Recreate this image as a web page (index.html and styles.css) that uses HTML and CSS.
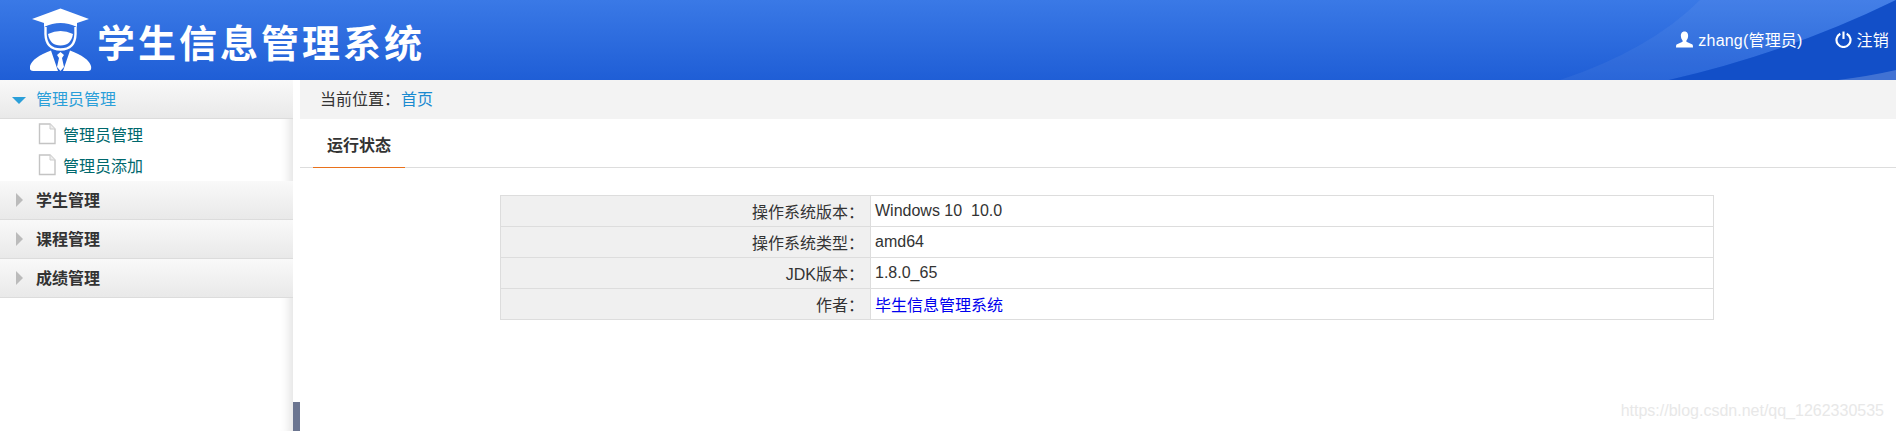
FILE: index.html
```html
<!DOCTYPE html>
<html lang="zh-CN">
<head>
    <meta charset="UTF-8">
    <title>学生信息管理系统</title>
    <link rel="stylesheet" href="styles.css">
</head>
<body>
    <div class="header">
        <svg class="header-bg" width="1896" height="80" viewBox="0 0 1896 80">
            <path d="M1560 80 Q1650 50 1700 0 H1896 Q1790 52 1669 80 Z" fill="#fff" opacity="0.05"/>
            <path d="M1669 80 Q1790 52 1896 0 V80 Z" fill="#124fc8"/>
            <path d="M1838 80 Q1870 76 1896 70 V80 Z" fill="#fff" opacity="0.2"/>
        </svg>
        <div class="logo">
            <svg class="logo-icon" width="64" height="66" viewBox="30 8 64 66">
                <path d="M60.5 9.5 L89 20 L77 24 V28 Q60.5 20 44 28 V24 L32 20 Z" fill="#fff"/>
                <path d="M45.5 28 V35 Q46 50.5 60.5 50.5 Q75 50.5 75.5 35 V28" fill="none" stroke="#fff" stroke-width="2.4"/>
                <path d="M48 35 Q60.5 29 73 35 Q71 46.5 60.5 46.5 Q50 46.5 48 35 Z" fill="#fff"/>
                <path d="M33 72 Q29 72 30 67 Q33 58 51 51.5 L58 72 Z M88 72 Q92 72 91 67 Q88 58 70 51.5 L63 72 Z" fill="#fff"/>
                <path d="M60.5 53 L64 56 L62 59 L64 68 L60.5 72 L57 68 L59 59 L57 56 Z" fill="#fff"/>
            </svg>
            <span class="logo-text">学生信息管理系统</span>
        </div>
        <div class="user-bar">
            <span class="user-item">
                <svg width="17" height="17" viewBox="0 0 16 16"><path d="M8 0.5 C10.6 0.5 11.6 2.6 11.4 5 C11.2 7 10.4 8.4 9.8 9 V10.2 L15.5 12.8 Q16 13.2 16 15.5 H0 Q0 13.2 0.5 12.8 L6.2 10.2 V9 C5.6 8.4 4.8 7 4.6 5 C4.4 2.6 5.4 0.5 8 0.5 Z" fill="#fff"/></svg>
                zhang(管理员)
            </span>
            <span class="user-item logout">
                <svg width="17" height="17" viewBox="0 0 16 16"><path d="M5 2.6 A6.6 6.6 0 1 0 11 2.6" fill="none" stroke="#fff" stroke-width="2"/><path d="M8 0.5 V7.5" stroke="#fff" stroke-width="2"/></svg>
                注销
            </span>
        </div>
    </div>

    <div class="main">
        <div class="sidebar">
            <div class="menu-title active"><span class="arrow-down"></span>管理员管理</div>
            <ul class="sub-menu">
                <li>
                    <svg width="18" height="22" viewBox="0 0 18 22"><path d="M1.5 1 H12 L17 6 V20.5 H1.5 Z" fill="#fff" stroke="#c4c4c4" stroke-width="1.4"/><path d="M12 1 V6 H17" fill="#eee" stroke="#ccc"/></svg>
                    管理员管理
                </li>
                <li>
                    <svg width="18" height="22" viewBox="0 0 18 22"><path d="M1.5 1 H12 L17 6 V20.5 H1.5 Z" fill="#fff" stroke="#c4c4c4" stroke-width="1.4"/><path d="M12 1 V6 H17" fill="#eee" stroke="#ccc"/></svg>
                    管理员添加
                </li>
            </ul>
            <div class="menu-title"><span class="arrow-right"></span>学生管理</div>
            <div class="menu-title"><span class="arrow-right"></span>课程管理</div>
            <div class="menu-title"><span class="arrow-right"></span>成绩管理</div>
        </div>

        <div class="content">
            <div class="crumb">当前位置：<a href="#">首页</a></div>
            <div class="tabs"><span class="tab">运行状态</span></div>
            <table class="info-table">
                <tr><th>操作系统版本：</th><td>Windows 10&nbsp; 10.0</td></tr>
                <tr><th>操作系统类型：</th><td>amd64</td></tr>
                <tr><th>JDK版本：</th><td>1.8.0_65</td></tr>
                <tr><th>作者：</th><td><a href="#">毕生信息管理系统</a></td></tr>
            </table>
        </div>
    </div>

    <div class="scroll-thumb"></div>
    <div class="watermark">https://blog.csdn.net/qq_1262330535</div>
</body>
</html>
```

FILE: styles.css
```css
html, body {
    height: 100%;
}

body {
    margin: 0;
    overflow: hidden;
    background-color: #fff;
    color: #333;
    font-family: "Liberation Sans", "Noto Sans CJK SC", sans-serif;
    font-size: 16px;
}

a {
    text-decoration: none;
}

.header {
    position: relative;
    height: 80px;
    display: flex;
    justify-content: space-between;
    align-items: center;
    background: linear-gradient(#3a79e6, #1f5ed6);
}

.header-bg {
    position: absolute;
    left: 0;
    top: 0;
}

.logo, .user-bar {
    position: relative;
}

.logo {
    display: flex;
    align-items: center;
    padding-left: 30px;
}

.logo-text {
    margin-left: 3px;
    margin-top: 2px;
    color: #fff;
    font-family: "Noto Sans CJK SC", sans-serif;
    font-size: 38px;
    font-weight: 700;
    letter-spacing: 3px;
    line-height: 40px;
}

.user-bar {
    display: flex;
    align-items: center;
    gap: 32px;
    padding-right: 7px;
    color: #fff;
    letter-spacing: 0.2px;
    margin-top: -2px;
}

.user-item {
    display: flex;
    align-items: center;
    gap: 5px;
}

.main {
    display: flex;
    height: 351px;
}

.sidebar {
    width: 293px;
    flex-shrink: 0;
    box-shadow: inset -12px 0 10px -8px #e4e4e4;
}

.menu-title {
    height: 38px;
    line-height: 40px;
    padding-left: 36px;
    position: relative;
    font-weight: 700;
    color: #333;
    background: linear-gradient(#f9f9f9, #e9e9e9);
    border-bottom: 1px solid #dcdcdc;
}

.menu-title.active {
    color: #2b9fd9;
    font-weight: 400;
}

.arrow-down {
    position: absolute;
    left: 12px;
    top: 17px;
    border: 7px solid transparent;
    border-top-color: #2b9fd9;
    border-bottom: 0;
}

.arrow-right {
    position: absolute;
    left: 16px;
    top: 12px;
    border: 7px solid transparent;
    border-left-color: #bbb;
    border-right: 0;
}

.sub-menu {
    margin: 0;
    padding: 0 0 0 38px;
    list-style: none;
    color: #00686d;
}

.sub-menu li {
    height: 31px;
    padding-bottom: 2px;
    box-sizing: border-box;
    display: flex;
    align-items: center;
    gap: 7px;
}

.content {
    flex: 1;
    margin-left: 7px;
}

.crumb {
    height: 39px;
    line-height: 39px;
    padding-left: 20px;
    background-color: #f3f3f3;
}

.crumb a {
    color: #1b8ad0;
    margin-left: 1px;
}

.tabs {
    height: 48px;
    margin-bottom: 27px;
    padding-left: 13px;
    border-bottom: 1px solid #ddd;
    display: flex;
    align-items: flex-end;
}

.tab {
    width: 92px;
    height: 48px;
    line-height: 54px;
    margin-bottom: -1px;
    text-align: center;
    font-weight: 700;
    border-bottom: 1px solid #e9711c;
}

.info-table {
    width: 1214px;
    margin-left: 200px;
    border-collapse: collapse;
}

.info-table th, .info-table td {
    height: 30px;
    padding: 0 6px 0 4px;
    border: 1px solid #ddd;
    font-weight: 400;
    text-align: left;
}

.info-table th {
    width: 359px;
    text-align: right;
    background-color: #f0f0f0;
}

.info-table a {
    color: #0000ee;
}

.scroll-thumb {
    position: absolute;
    left: 293px;
    top: 402px;
    width: 7px;
    height: 29px;
    background-color: #6b7590;
}

.watermark {
    position: absolute;
    right: 12px;
    bottom: 11px;
    color: #e8e8e8;
    font-size: 16px;
}
```
